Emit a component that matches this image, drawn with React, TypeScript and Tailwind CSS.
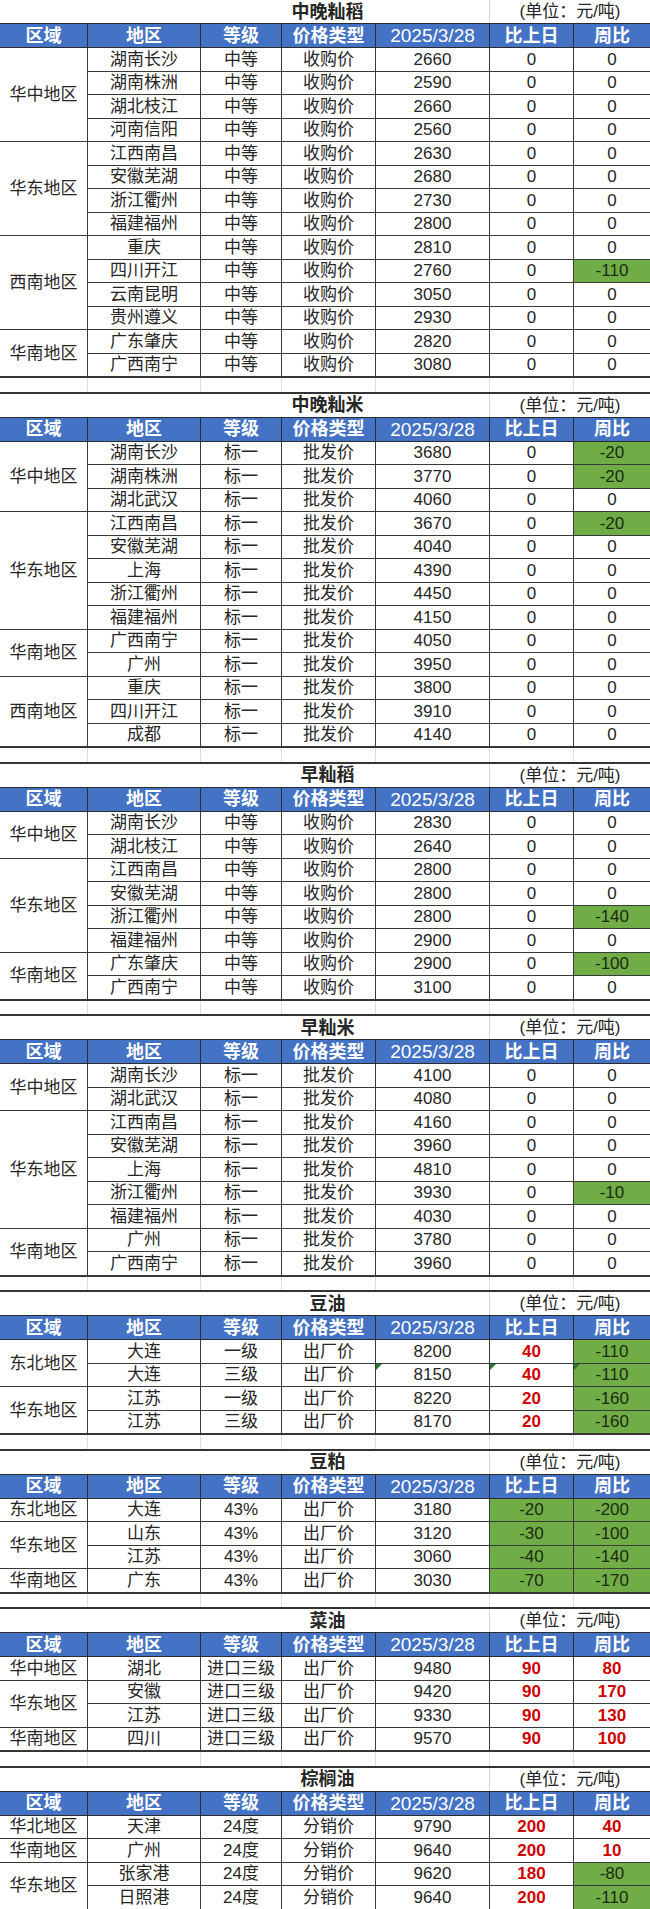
import React from "react";

type Group = { region: string; rows: string[][] };
type TableData = { title: string; groups: Group[]; tri?: number[] };

const W = ["w-[113px]", "w-[81px]", "w-[94px]", "w-[114px]", "w-[84px]", "w-[76px]"];

const mk = (grade: string, type: string, list: [string, string, string?, string?][]) =>
  list.map(([d, p, day, wk]) => [d, grade, type, p, day ?? "0", wk ?? "0"]);

const tables: TableData[] = [
  {
    title: "中晚籼稻",
    groups: [
      { region: "华中地区", rows: mk("中等", "收购价", [["湖南长沙", "2660"], ["湖南株洲", "2590"], ["湖北枝江", "2660"], ["河南信阳", "2560"]]) },
      { region: "华东地区", rows: mk("中等", "收购价", [["江西南昌", "2630"], ["安徽芜湖", "2680"], ["浙江衢州", "2730"], ["福建福州", "2800"]]) },
      { region: "西南地区", rows: mk("中等", "收购价", [["重庆", "2810"], ["四川开江", "2760", "0", "-110g"], ["云南昆明", "3050"], ["贵州遵义", "2930"]]) },
      { region: "华南地区", rows: mk("中等", "收购价", [["广东肇庆", "2820"], ["广西南宁", "3080"]]) },
    ],
  },
  {
    title: "中晚籼米",
    groups: [
      { region: "华中地区", rows: mk("标一", "批发价", [["湖南长沙", "3680", "0", "-20g"], ["湖南株洲", "3770", "0", "-20g"], ["湖北武汉", "4060"]]) },
      { region: "华东地区", rows: mk("标一", "批发价", [["江西南昌", "3670", "0", "-20g"], ["安徽芜湖", "4040"], ["上海", "4390"], ["浙江衢州", "4450"], ["福建福州", "4150"]]) },
      { region: "华南地区", rows: mk("标一", "批发价", [["广西南宁", "4050"], ["广州", "3950"]]) },
      { region: "西南地区", rows: mk("标一", "批发价", [["重庆", "3800"], ["四川开江", "3910"], ["成都", "4140"]]) },
    ],
  },
  {
    title: "早籼稻",
    groups: [
      { region: "华中地区", rows: mk("中等", "收购价", [["湖南长沙", "2830"], ["湖北枝江", "2640"]]) },
      { region: "华东地区", rows: mk("中等", "收购价", [["江西南昌", "2800"], ["安徽芜湖", "2800"], ["浙江衢州", "2800", "0", "-140g"], ["福建福州", "2900"]]) },
      { region: "华南地区", rows: mk("中等", "收购价", [["广东肇庆", "2900", "0", "-100g"], ["广西南宁", "3100"]]) },
    ],
  },
  {
    title: "早籼米",
    groups: [
      { region: "华中地区", rows: mk("标一", "批发价", [["湖南长沙", "4100"], ["湖北武汉", "4080"]]) },
      { region: "华东地区", rows: mk("标一", "批发价", [["江西南昌", "4160"], ["安徽芜湖", "3960"], ["上海", "4810"], ["浙江衢州", "3930", "0", "-10g"], ["福建福州", "4030"]]) },
      { region: "华南地区", rows: mk("标一", "批发价", [["广州", "3780"], ["广西南宁", "3960"]]) },
    ],
  },
  {
    title: "豆油",
    tri: [1],
    groups: [
      { region: "东北地区", rows: [["大连", "一级", "出厂价", "8200", "40r", "-110g"], ["大连", "三级", "出厂价", "8150", "40r", "-110g"]] },
      { region: "华东地区", rows: [["江苏", "一级", "出厂价", "8220", "20r", "-160g"], ["江苏", "三级", "出厂价", "8170", "20r", "-160g"]] },
    ],
  },
  {
    title: "豆粕",
    groups: [
      { region: "东北地区", rows: mk("43%", "出厂价", [["大连", "3180", "-20g", "-200g"]]) },
      { region: "华东地区", rows: mk("43%", "出厂价", [["山东", "3120", "-30g", "-100g"], ["江苏", "3060", "-40g", "-140g"]]) },
      { region: "华南地区", rows: mk("43%", "出厂价", [["广东", "3030", "-70g", "-170g"]]) },
    ],
  },
  {
    title: "菜油",
    groups: [
      { region: "华中地区", rows: mk("进口三级", "出厂价", [["湖北", "9480", "90r", "80r"]]) },
      { region: "华东地区", rows: mk("进口三级", "出厂价", [["安徽", "9420", "90r", "170r"], ["江苏", "9330", "90r", "130r"]]) },
      { region: "华南地区", rows: mk("进口三级", "出厂价", [["四川", "9570", "90r", "100r"]]) },
    ],
  },
  {
    title: "棕榈油",
    groups: [
      { region: "华北地区", rows: mk("24度", "分销价", [["天津", "9790", "200r", "40r"]]) },
      { region: "华南地区", rows: mk("24度", "分销价", [["广州", "9640", "200r", "10r"]]) },
      { region: "华东地区", rows: mk("24度", "分销价", [["张家港", "9620", "180r", "-80g"], ["日照港", "9640", "200r", "-110g"]]) },
    ],
  },
];

function Tri() {
  return (
    <span className="absolute left-0 top-0 h-0 w-0 border-t-[6px] border-r-[6px] border-t-[#1f7a30] border-r-transparent" />
  );
}

function DataCell({ v, i, tri }: { v: string; i: number; tri: boolean }) {
  let text = v;
  let cls = "text-[#262626]";
  const last = v.slice(-1);
  if (i >= 4 && (last === "g" || last === "r")) {
    text = v.slice(0, -1);
    if (last === "g") cls = "bg-[#70ad47] text-[#1c2a12]";
    else cls = "text-[#d00000] font-bold";
  }
  return (
    <div
      className={`relative flex h-full items-center justify-center ${W[i]} ${i < 5 ? "border-r border-[#3a3a3a]" : ""} ${cls}`}
    >
      {tri && i >= 3 && <Tri />}
      {text}
    </div>
  );
}

function Table({ t }: { t: TableData }) {
  let rowIndex = 0;
  return (
    <div>
      <div className="flex h-[23px] text-[#262626]">
        <div className="flex w-[490px] items-center justify-center border-r border-[#d6d6d6] pl-[166px] text-[18px] font-bold">
          {t.title}
        </div>
        <div className="flex w-[160px] items-center justify-center text-[17px]">(单位：元/吨)</div>
      </div>
      <div className="flex h-[25px] border-y border-[#2c2c2c] bg-[#4472c4] text-white">
        <div className="flex w-[88px] items-center justify-center border-r border-[#2c2c2c] text-[18px] font-bold">区域</div>
        {["地区", "等级", "价格类型", "2025/3/28", "比上日", "周比"].map((h, i) => (
          <div
            key={h}
            className={`flex h-full items-center justify-center ${W[i]} ${i < 5 ? "border-r border-[#2c2c2c]" : ""} ${
              i === 3 ? "text-[19px]" : "text-[18px] font-bold"
            }`}
          >
            {h}
          </div>
        ))}
      </div>
      {t.groups.map((g) => (
        <div key={g.region + rowIndex} className="flex">
          <div className="flex w-[88px] items-center justify-center border-r border-b border-[#3a3a3a] text-[17px] text-[#262626]">
            {g.region}
          </div>
          <div className="flex flex-col">
            {g.rows.map((r) => {
              const idx = rowIndex++;
              const tri = !!t.tri && t.tri.includes(idx);
              return (
                <div key={idx} className="flex h-[23.5px] border-b border-[#3a3a3a] text-[17px]">
                  {r.map((v, i) => (
                    <DataCell key={i} v={v} i={i} tri={tri} />
                  ))}
                </div>
              );
            })}
          </div>
        </div>
      ))}
    </div>
  );
}

function Gap() {
  return (
    <div className="flex h-[16.5px] border-t border-b-2 border-[#333]">
      <div className="w-[88px] border-r border-[#dedede]" />
      {W.map((w, i) => (
        <div key={i} className={`${w} ${i < 5 ? "border-r border-[#dedede]" : ""}`} />
      ))}
    </div>
  );
}

export default function App() {
  return (
    <div className="w-[650px] bg-white font-['Liberation_Sans','Noto_Sans_CJK_SC',sans-serif] leading-none">
      {tables.map((t, i) => (
        <React.Fragment key={t.title}>
          {i > 0 && <Gap />}
          <Table t={t} />
        </React.Fragment>
      ))}
    </div>
  );
}
